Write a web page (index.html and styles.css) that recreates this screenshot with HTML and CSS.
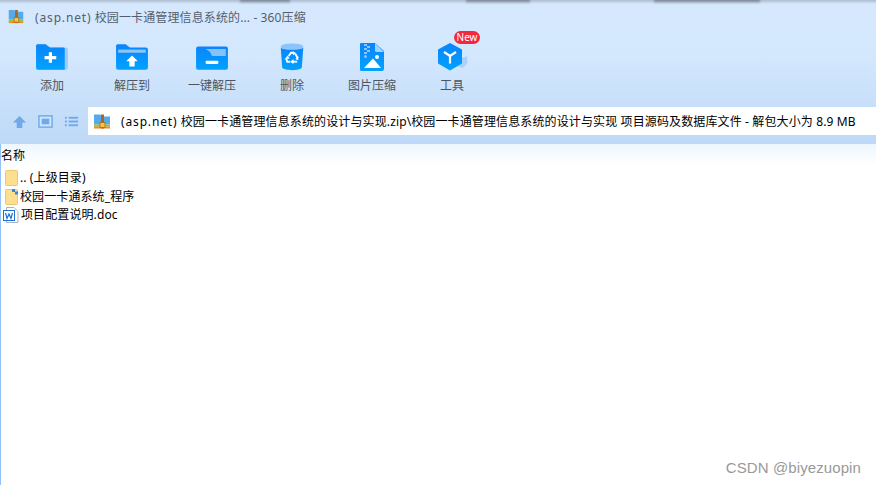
FILE: index.html
```html
<!DOCTYPE html>
<html lang="zh">
<head>
<meta charset="utf-8">
<title>360压缩</title>
<link rel="stylesheet" href="styles.css">
</head>
<body>
<div class="app">
  <header class="head">
    <div class="strip"><i class="sh sh1"></i><i class="sh sh2"></i><i class="sh sh3"></i></div>
    <div class="title">
      <svg class="zip zip-t" viewBox="0 0 16 16"><use href="#zipi"/></svg>
      <span class="title-text"><span class="wide">(asp.net)</span> 校园一卡通管理信息系统的... - 360压缩</span>
    </div>
    <nav class="tools">
      <div class="tool">
        <svg class="ic" viewBox="0 0 32 28"><path d="M10 2 H2.500 A1.500 1.500 0 0 0 1 3.500 V24 A2 2 0 0 0 3 26 H29 A2 2 0 0 0 31 24 V7 A2 2 0 0 0 29 5 H14 Z" fill="#9fcbfb"/><path d="M10 2 H2.500 A1.500 1.500 0 0 0 1 3.500 V24 A2 2 0 0 0 3 26 H28 V7 A1.500 1.500 0 0 0 27 5 H14 Z" fill="url(#b)"/><path d="M13 9.500 H16 V13 H20 V16 H16 V19.500 H13 V16 H9 V13 H13 Z" fill="#fff"/></svg>
        <span>添加</span>
      </div>
      <div class="tool">
        <svg class="ic" viewBox="0 0 32 28"><path d="M10 2 H2.500 A1.500 1.500 0 0 0 1 3.500 V24 A2 2 0 0 0 3 26 H29 A2 2 0 0 0 31 24 V7 A2 2 0 0 0 29 5 H14 Z" fill="url(#b)"/><rect x="3" y="7" width="26" height="3" fill="#8cc4fc"/><path d="M16 12.500 L21.500 18 H18.500 V23 H13.500 V18 H10.500 Z" fill="#fff"/></svg>
        <span>解压到</span>
      </div>
      <div class="tool">
        <svg class="ic" viewBox="0 0 32 28"><path d="M3 4 H29 A2 2 0 0 1 31 6 V24 A2 2 0 0 1 29 26 H3 A2 2 0 0 1 1 24 V6 A2 2 0 0 1 3 4 Z" fill="url(#b)"/><path d="M3 6.500 H10 L14 9 L16 13 H29 V6.500 Z" fill="#87c1fc"/><rect x="10" y="17.500" width="12" height="3" rx="1" fill="#fff"/></svg>
        <span>一键解压</span>
      </div>
      <div class="tool">
        <svg class="ic" viewBox="0 0 28 32"><ellipse cx="14" cy="5" rx="12" ry="3.500" fill="#8cc4fc"/><path d="M2 6 C6 9 22 9 26 6 L24.500 27 C24 31 4 31 3.500 27 Z" fill="url(#b)"/><g fill="none" stroke="#fff" stroke-width="2"><path d="M10.500 15 L13 11.500 H15.500"/><path d="M17.500 12.500 L20 17"/><path d="M19.500 21 H15"/><path d="M12 21 H9 L7.800 18"/></g><g fill="#fff"><path d="M15 9.800 L18.500 12 L15 14 Z"/><path d="M21 15.500 L20.500 19.500 L17.500 18 Z"/><path d="M15.500 18.500 V23.500 L12 21 Z"/><path d="M6 18.500 L9.500 14.500 L11.500 17.500 Z"/></g></svg>
        <span>删除</span>
      </div>
      <div class="tool">
        <svg class="ic" viewBox="0 0 26 30"><path d="M2 1 H16 L25 9 V27 A2 2 0 0 1 23 29 H2 A1.500 1.500 0 0 1 1 27.500 V2 A1.500 1.500 0 0 1 2 1 Z" fill="url(#b)"/><path d="M16 1 L25 10 H17.500 A1.500 1.500 0 0 1 16 8.500 Z" fill="#a3d0fd"/><g fill="#8cc4fc"><rect x="5" y="2" width="3" height="2"/><rect x="8" y="4" width="3" height="2"/><rect x="5" y="6" width="3" height="2"/><rect x="8" y="8" width="3" height="2"/><rect x="5" y="10" width="3" height="2"/><circle cx="6.500" cy="14.500" r="1.500"/></g><circle cx="18" cy="15" r="2" fill="#fff"/><path d="M5 26 L14 16.500 L22 26 Z" fill="#fff"/></svg>
        <span>图片压缩</span>
      </div>
      <div class="tool">
        <svg class="ic" viewBox="-1 0 32 30"><path d="M24 16 L30 14.500 L30.500 21 L26 26 L20 24 Z" fill="#a8d1fb"/><path d="M13 1 L25 7.500 V21.500 L13 28.500 L1 21.500 V7.500 Z" fill="url(#b)"/><path d="M7 10 L13 14 L19 10 M13 14 V21.500" fill="none" stroke="#fff" stroke-width="2.200"/></svg>
        <span>工具</span>
        <b class="badge">New</b>
      </div>
    </nav>
    <div class="addr-row">
      <div class="nav-icons">
        <svg class="nav-i" viewBox="0 0 16 16"><path d="M8 2 L15 9 H11 V15 H5 V9 H1 Z" fill="#6ea9ea"/></svg>
        <svg class="nav-i" viewBox="0 0 16 16"><rect x="1" y="2" width="14" height="12" fill="#cfe3f9" stroke="#6ea9ea" stroke-width="1.500"/><rect x="4" y="5" width="8" height="6" fill="#6ea9ea"/></svg>
        <svg class="nav-i" viewBox="0 0 16 16"><g fill="#6ea9ea"><rect x="1" y="3" width="2" height="2"/><rect x="5" y="3" width="10" height="2"/><rect x="1" y="7" width="2" height="2"/><rect x="5" y="7" width="10" height="2"/><rect x="1" y="11" width="2" height="2"/><rect x="5" y="11" width="10" height="2"/></g></svg>
      </div>
      <div class="addr">
        <svg class="zip" viewBox="0 0 16 16"><use href="#zipi"/></svg>
        <span class="addr-text"><span class="wide">(asp.net)</span> 校园一卡通管理信息系统的设计与实现.zip\校园一卡通管理信息系统的设计与实现 项目源码及数据库文件 - 解包大小为 8.9 MB</span>
      </div>
    </div>
  </header>
  <main class="list">
    <div class="list-head">名称</div>
    <ul class="rows">
      <li class="row">
        <svg class="fi" viewBox="0 0 13 16"><rect x="0.500" y="0.500" width="12" height="15" rx="1" fill="#fde08f" stroke="#e6c974"/></svg>
        <span>.. (上级目录)</span>
      </li>
      <li class="row">
        <svg class="fi" viewBox="0 0 13 16"><rect x="0.500" y="0.500" width="12" height="15" rx="1" fill="#fde08f" stroke="#e6c974"/><rect x="7" y="0" width="3" height="3" fill="#3a87d8"/><rect x="10" y="2.500" width="3" height="3" fill="#3a87d8"/></svg>
        <span>校园一卡通系统_程序</span>
      </li>
      <li class="row row-doc">
        <svg class="fi" viewBox="0 0 16 16"><path d="M3.500 0.500 H11 L15 4.500 V15.500 H3.500 Z" fill="#fff" stroke="#a9b4c2"/><rect x="0.500" y="3.500" width="11" height="10" fill="#fff" stroke="#1f6fd0"/><path d="M2.500 6 L4 11.500 L6 7 L8 11.500 L9.500 6" fill="none" stroke="#1f6fd0" stroke-width="1.200"/></svg>
        <span>项目配置说明.doc</span>
      </li>
    </ul>
  </main>
  <div class="mark">CSDN @biyezuopin</div>
</div>
<svg class="defs" width="0" height="0">
  <defs>
    <linearGradient id="b" x1="0" y1="0" x2="0" y2="1"><stop offset="0" stop-color="#0a84fb"/><stop offset="1" stop-color="#00a2ff"/></linearGradient>
    <symbol id="zipi" viewBox="0 0 16 16">
      <path d="M0 1 H6 L8 3 H16 V11 H0 Z" fill="#56a9ea"/>
      <rect x="0" y="11" width="16" height="2" fill="#8cc63f"/>
      <rect x="0" y="13" width="16" height="2" fill="#f08a24"/>
      <rect x="7" y="1" width="3" height="14" fill="#a8691f"/>
      <rect x="6" y="9" width="5" height="5" fill="#f4c542" stroke="#a8691f" stroke-width="0.800"/>
    </symbol>
  </defs>
</svg>
</body>
</html>
```
FILE: styles.css
```css
* { box-sizing: border-box; }
html, body { margin: 0; padding: 0; height: 100%; background: #fff; overflow: hidden; }
body { font-family: "Noto Sans", "Noto Sans CJK SC", "Liberation Sans", sans-serif; font-size: 12px; color: #000; }
.app { position: relative; width: 876px; height: 485px; display: flex; flex-direction: column; overflow: hidden; }
.defs { position: absolute; }

.head { height: 144px; background: linear-gradient(#d5e8fe 0, #d3e7fd 40%, #bdd9f7 100%); display: flex; flex-direction: column; }
.strip { position: relative; height: 4px; background: linear-gradient(#aebdcf, #d5e8fe); flex: none; }
.sh { position: absolute; top: -1px; height: 4px; background: linear-gradient(#4f5a68, #c3d4e6); filter: blur(1px); }
.sh1 { left: 240px; width: 50px; }
.sh2 { left: 466px; width: 64px; }
.sh3 { left: 654px; width: 106px; }

.title { height: 23px; margin-top: 1px; display: flex; align-items: center; padding-left: 8px; flex: none; }
.title-text { margin-left: 11px; padding-top: 2px; font-size: 12px; letter-spacing: 0.120px; color: #555f6c; white-space: nowrap; line-height: 16px; }
.wide { letter-spacing: 0.850px; }
.zip { width: 16px; height: 16px; flex: none; }
.zip-t { width: 16px; height: 15px; }

.tools { display: flex; padding-left: 12px; height: 79px; flex: none; padding-top: 14px; }
.tool { position: relative; width: 80px; display: flex; flex-direction: column; align-items: center; }
.ic { height: 30px; width: 34px; display: block; }
.tool span { margin-top: 5px; font-size: 12px; line-height: 18px; color: #4c5560; }
.badge { position: absolute; left: 42px; top: -11px; width: 26px; height: 13px; border-radius: 7px; background: #f3273d; color: #fff; font: 400 10px/13px "Noto Sans", sans-serif; text-align: center; }

.addr-row { display: flex; height: 28px; flex: none; }
.nav-icons { width: 88px; display: flex; align-items: center; gap: 11px; padding-left: 12px; }
.nav-i { width: 15px; height: 15px; display: block; }
.addr { flex: 1; background: #fff; display: flex; align-items: center; padding-left: 6px; }
.addr .zip { width: 16px; height: 17px; }
.addr-text { margin-left: 11px; padding-top: 2px; font-size: 12px; letter-spacing: 0.125px; color: #000; white-space: nowrap; line-height: 16px; }

.list { flex: 1; border-left: 1px solid #92c2f6; background: linear-gradient(#eef6fe 0, #ffffff 22px, #ffffff 100%); }
.list-head { height: 24px; padding-top: 1px; line-height: 22px; font-size: 12px; color: #000; }
.rows { list-style: none; margin: 0; padding: 0; }
.row { height: 18.500px; display: flex; align-items: center; padding-left: 4px; font-size: 12px; line-height: 18px; white-space: nowrap; }
.row span { margin-left: 2px; padding-top: 2px; letter-spacing: 0.100px; }
.row-doc { padding-left: 2px; }
.fi { width: 13px; height: 16px; flex: none; margin-top: 2px; }
.row-doc .fi { width: 16px; }

.mark { position: absolute; right: 15px; bottom: 9px; font: 15px/17px "Liberation Sans", sans-serif; color: #999; letter-spacing: 0.100px; }
```
